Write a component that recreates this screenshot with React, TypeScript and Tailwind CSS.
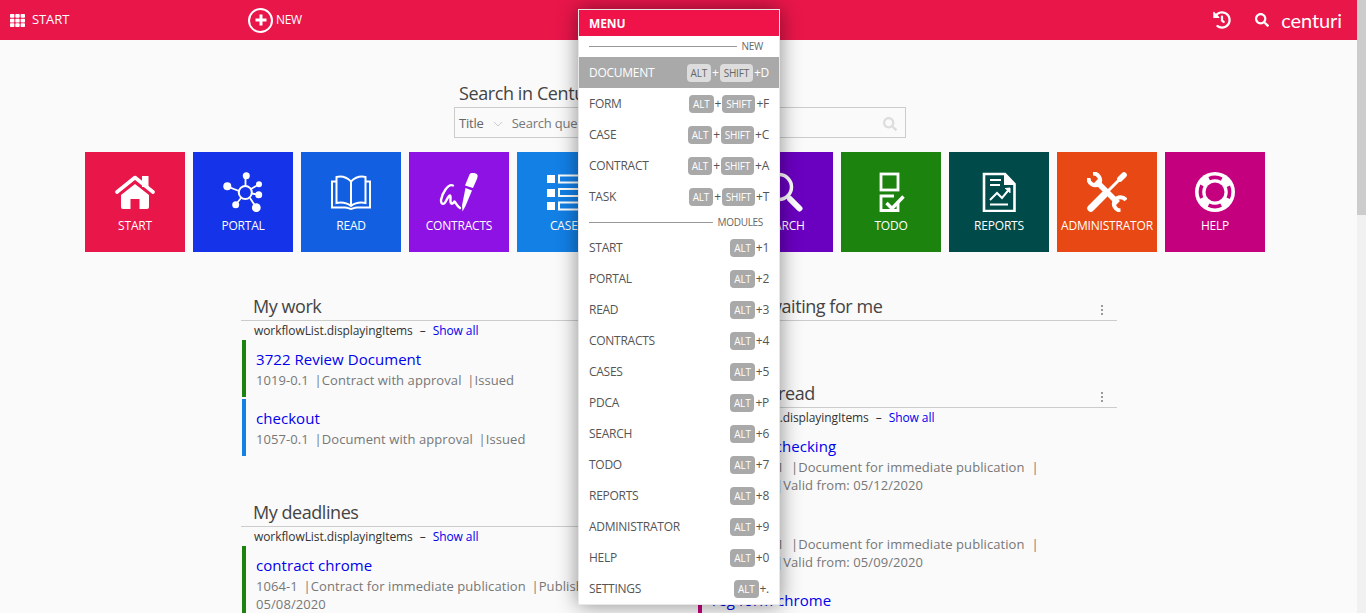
import { FaHistory, FaSearch, FaTh } from 'react-icons/fa';
import type { ReactNode } from 'react';

const font = { fontFamily: '"Open Sans", "Noto Sans", sans-serif' };

function HomeIcon() {
  return (
    <svg viewBox="0 0 40 40" className="w-10 h-10" fill="white">
      <rect x="27" y="4" width="6.5" height="11" />
      <path d="M2 20 L20 5.5 L38 20" fill="none" stroke="white" strokeWidth="3.6" strokeLinecap="round" strokeLinejoin="round" />
      <path d="M6 23 L20 12 L34 23 V35 a2 2 0 0 1 -2 2 H24.5 V27 H15.5 V37 H8 a2 2 0 0 1 -2 -2Z" />
    </svg>
  );
}

function PortalIcon() {
  return (
    <svg viewBox="0 0 40 40" className="w-10 h-10" fill="white" stroke="white" strokeWidth="1.8">
      <path d="M16 19 L4 14.3 M22.5 14 V4 M28 17 L36 12.3 M29 21.5 L35.7 22.7 M27 26 L33.3 35.7 M18 26 L12.7 32.7" />
      <circle cx="22.3" cy="20.5" r="6.5" fill="none" strokeWidth="2" />
      <circle cx="4.3" cy="14.3" r="4" stroke="none" />
      <circle cx="23.3" cy="3.8" r="3.5" stroke="none" />
      <circle cx="36" cy="12.3" r="3" stroke="none" />
      <circle cx="35.7" cy="22.7" r="3.5" stroke="none" />
      <circle cx="33.3" cy="35.7" r="4.4" stroke="none" />
      <circle cx="12.7" cy="32.7" r="3.5" stroke="none" />
    </svg>
  );
}

function ReadIcon() {
  return (
    <svg viewBox="0 0 40 40" className="w-10 h-10" fill="none" stroke="white" strokeWidth="2">
      <path d="M20 9.5 C16 5.5 10 4 5.5 5 V31 C11 30 16 31 20 34 C24 31 29 30 34.5 31 V5 C30 4 24 5.5 20 9.5 Z M20 9.5 V34" />
      <path d="M5 9.5 H1 V35.5 H14 C17 35.5 18.5 37 20 37 C21.5 37 23 35.5 26 35.5 H39 V9.5 H35" />
    </svg>
  );
}

function ContractsIcon() {
  return (
    <svg viewBox="0 0 40 40" className="w-10 h-10" fill="white">
      <path d="M14 13.5 C9 11 3 22 2 28 C2 33 5 33 7 29 C9 25 12 20 11.5 27 C11 32 13 33 15 30 C16 28 16.5 33 21 36" fill="none" stroke="white" strokeWidth="2.4" strokeLinecap="round" strokeLinejoin="round" />
      <path d="M26.5 16 L33 18.6 L26.5 34 L23.5 39.5 L23 33.5 Z" />
      <path d="M26 13.5 L30.5 2.5 C31.5 0.5 37 0.5 38.5 3 C39 4.5 38 7 37.5 8 L34 16 Z" />
    </svg>
  );
}

function CasesIcon() {
  return (
    <svg viewBox="0 0 40 40" className="w-10 h-10" fill="white" stroke="white" strokeWidth="2">
      <rect x="0" y="3" width="8" height="8" stroke="none" />
      <rect x="0" y="17" width="8" height="8" stroke="none" />
      <rect x="0" y="30" width="8" height="8" stroke="none" />
      <rect x="12" y="3.5" width="27" height="7" fill="none" />
      <rect x="12" y="17" width="27" height="7" fill="none" />
      <rect x="12" y="30.5" width="27" height="7" fill="none" />
    </svg>
  );
}

function PdcaIcon() {
  return (
    <svg viewBox="0 0 40 40" className="w-10 h-10" fill="none" stroke="white" strokeWidth="3">
      <circle cx="20" cy="20" r="16" />
    </svg>
  );
}

function SearchIcon() {
  return (
    <svg viewBox="0 0 40 40" className="w-10 h-10" fill="none" stroke="white">
      <circle cx="16" cy="15" r="12.5" strokeWidth="3.5" />
      <path d="M27 27 L36.5 36.5" strokeWidth="6" strokeLinecap="round" />
    </svg>
  );
}

function TodoIcon() {
  return (
    <svg viewBox="0 0 40 40" className="w-10 h-10" fill="none" stroke="white" strokeWidth="2.8">
      <rect x="10" y="2" width="17" height="16" />
      <path d="M27 29 V38.5 H10 V24 H23" />
      <path d="M15.5 31 L21 36.5 L32.5 24.5" strokeWidth="3.4" />
    </svg>
  );
}

function ReportsIcon() {
  return (
    <svg viewBox="0 0 40 40" className="w-10 h-10" fill="none" stroke="white" strokeWidth="2">
      <path d="M5 2 H26 L35.5 12 V39 H5 Z" strokeWidth="2.6" />
      <path d="M26 2 V12 H35.5" fill="white" />
      <path d="M11 8 H22 M11 13 H21 M11 32.5 H29" />
      <path d="M11 28 L18 21 L23 26 L30 17.5" />
      <path d="M26 16.5 L31 16 L31 21" fill="white" strokeWidth="1" />
    </svg>
  );
}

function AdminIcon() {
  return (
    <svg viewBox="0 0 40 40" className="w-10 h-10" fill="none" stroke="white" strokeLinecap="round">
      <path d="M22 18 L33 7" strokeWidth="3" />
      <path d="M33 7 L37 3" strokeWidth="5.6" />
      <path d="M3.8 36.2 L17 23" strokeWidth="7" />
      <path d="M9 9 L31 31" strokeWidth="5.4" strokeLinecap="butt" />
      <path d="M1.5 6 A6.8 6.8 0 0 0 12 12 A6.8 6.8 0 0 0 6 1.5" strokeWidth="4" strokeLinecap="butt" />
      <path d="M39 28 A6.8 6.8 0 0 0 28 28 A6.8 6.8 0 0 0 33.5 38.5" strokeWidth="4" strokeLinecap="butt" />
    </svg>
  );
}

function HelpIcon() {
  return (
    <svg viewBox="0 0 40 40" className="w-10 h-10">
      <circle cx="20" cy="20" r="20" fill="white" />
      <circle cx="20" cy="20" r="14.6" fill="none" stroke="#c4007f" strokeWidth="3.6" strokeDasharray="13 9.94" strokeDashoffset="6.5" />
      <circle cx="20" cy="20" r="9.5" fill="#c4007f" />
    </svg>
  );
}

const tiles: { label: string; bg: string; icon: ReactNode }[] = [
  { label: 'START', bg: 'bg-[#e9164a]', icon: <HomeIcon /> },
  { label: 'PORTAL', bg: 'bg-[#1533e8]', icon: <PortalIcon /> },
  { label: 'READ', bg: 'bg-[#135fe2]', icon: <ReadIcon /> },
  { label: 'CONTRACTS', bg: 'bg-[#8e12e4]', icon: <ContractsIcon /> },
  { label: 'CASES', bg: 'bg-[#1380e6]', icon: <CasesIcon /> },
  { label: 'PDCA', bg: 'bg-[#1338c4]', icon: <PdcaIcon /> },
  { label: 'SEARCH', bg: 'bg-[#6a00c0]', icon: <SearchIcon /> },
  { label: 'TODO', bg: 'bg-[#1c830f]', icon: <TodoIcon /> },
  { label: 'REPORTS', bg: 'bg-[#004a4a]', icon: <ReportsIcon /> },
  { label: 'ADMINISTRATOR', bg: 'bg-[#e84813]', icon: <AdminIcon /> },
  { label: 'HELP', bg: 'bg-[#c4007f]', icon: <HelpIcon /> },
];

function Heading({ title, menu }: { title: string; menu?: boolean }) {
  return (
    <div className="h-[26px] border-b border-[#cccccc] pl-3 pr-[14px] flex items-center justify-between">
      <span className="text-[18px] leading-[24px] -mt-[4px] text-[#444444] tracking-[-0.45px] whitespace-nowrap">{title}</span>
      {menu && (
        <span className="flex flex-col gap-[2px] mt-1">
          <span className="w-[2px] h-[2px] bg-[#999999]" />
          <span className="w-[2px] h-[2px] bg-[#999999]" />
          <span className="w-[2px] h-[2px] bg-[#999999]" />
        </span>
      )}
    </div>
  );
}

function ShowAll() {
  return (
    <div className="h-[19px] pl-[13px] pt-px flex items-center text-[12px] text-[#333333] tracking-[-0.08px] whitespace-nowrap">
      <span>workflowList.displayingItems</span>
      <span className="ml-[7px] mr-[7px]">–</span>
      <a className="text-[#0000ee]">Show all</a>
    </div>
  );
}

function Item({ title, lines, color, h }: { title: string; lines: string[]; color: string; h: string }) {
  return (
    <div className={`${h} border-l-4 ${color} ml-px pl-[10px] pt-[9px] whitespace-pre`}>
      <div className="text-[15px] leading-[21px] text-[#0000ee] tracking-[0.05px]">{title}</div>
      {lines.map((l, i) => (
        <div key={i} className={`text-[13px] leading-[18px] text-[#777777] tracking-[0.08px] ${i === 0 ? 'mt-[1px]' : ''}`}>
          {l}
        </div>
      ))}
    </div>
  );
}

function Key({ label, active }: { label: string; active?: boolean }) {
  return (
    <span
      className={`h-[18px] px-[4px] rounded-[4px] text-[10px] leading-[18px] tracking-[-0.2px] ${
        active ? 'bg-[#dddddd] text-[#666666]' : 'bg-[#a9a9a9] text-white'
      }`}
    >
      {label}
    </span>
  );
}

function MenuRow({ label, k, shift, active }: { label: string; k: string; shift?: boolean; active?: boolean }) {
  return (
    <div
      className={`h-[31px] px-[10px] flex items-center justify-between text-[12px] tracking-[-0.27px] ${
        active ? 'bg-[#a9a9a9] text-white' : 'text-[#555555]'
      }`}
    >
      <span>{label}</span>
      <span className="flex items-center">
        <Key label="ALT" active={active} />
        {shift && <span className="mx-[1px]">+</span>}
        {shift && <Key label="SHIFT" active={active} />}
        <span className="ml-px">+{k}</span>
      </span>
    </div>
  );
}

function MenuDivider({ label, h }: { label: string; h: string }) {
  return (
    <div className={`${h} pl-[10px] pr-[16px] flex items-center gap-[5px] text-[10px] text-[#666666]`}>
      <span className="flex-1 h-px bg-[#999999]" />
      <span className="tracking-[-0.3px]">{label}</span>
    </div>
  );
}

const modules = [
  ['START', '1'],
  ['PORTAL', '2'],
  ['READ', '3'],
  ['CONTRACTS', '4'],
  ['CASES', '5'],
  ['PDCA', 'P'],
  ['SEARCH', '6'],
  ['TODO', '7'],
  ['REPORTS', '8'],
  ['ADMINISTRATOR', '9'],
  ['HELP', '0'],
  ['SETTINGS', '.'],
];

export default function App() {
  return (
    <div className="relative h-[613px] overflow-hidden flex bg-[#fafafa]" style={font}>
      <div className="flex-1 min-w-0">
        <header className="h-10 bg-[#e9164a] flex items-center pl-[10px] pr-[15px] text-white">
          <div className="w-[238px] flex items-center text-[13px] tracking-[-0.1px]">
            <FaTh className="w-[15px] h-[15px]" />
            <span className="ml-[7px]">START</span>
          </div>
          <div className="flex items-center text-[12px] tracking-[-0.3px]">
            <span className="w-[25px] h-[25px] rounded-full border-2 border-white flex items-center justify-center">
              <svg viewBox="0 0 12 12" className="w-[12px] h-[12px]" fill="none" stroke="white" strokeWidth="3">
                <path d="M6 0.5 V11.5 M0.5 6 H11.5" />
              </svg>
            </span>
            <span className="ml-[3px]">NEW</span>
          </div>
          <div className="ml-auto flex items-center">
            <FaHistory className="w-[18px] h-[18px]" />
            <FaSearch className="w-[14px] h-[14px] ml-[24px]" />
            <span className="ml-[12px] text-[20px] leading-[24px] tracking-[-0.1px]" style={{ fontFamily: 'Lato, sans-serif' }}>
              centuri
            </span>
          </div>
        </header>

        <section className="pl-[454px] pt-[42px]">
          <div className="pl-[5px] h-[24px] text-[18px] leading-[22px] text-[#444444] tracking-[-0.4px] whitespace-nowrap">Search in Centuri</div>
          <div className="mt-px w-[452px] h-[31px] border border-[#cccccc] flex items-center pl-[4px] pr-[8px] pt-[2px] text-[13px] text-[#666666] tracking-[-0.2px]">
            <span>Title</span>
            <svg viewBox="0 0 10 6" className="w-[10px] h-[6px] ml-[9px]" fill="none" stroke="#cccccc">
              <path d="M1 1 L5 5 L9 1" />
            </svg>
            <span className="ml-[9px] text-[#777777]">Search query...</span>
            <FaSearch className="ml-auto w-[14px] h-[14px] text-[#dddddd]" />
          </div>
        </section>

        <section className="mt-[14px] pl-[85px] flex gap-2">
          {tiles.map((t) => (
            <div key={t.label} className={`w-[100px] h-[100px] shrink-0 pt-[20px] flex flex-col items-center text-white ${t.bg}`}>
              {t.icon}
              <span className="mt-[5px] text-[12px] leading-[18px] tracking-[-0.2px] whitespace-nowrap">{t.label}</span>
            </div>
          ))}
        </section>

        <section className="mt-[43px] pl-[241px] flex gap-[36px]">
          <div className="w-[420px]">
            <Heading title="My work" />
            <ShowAll />
            <Item title="3722 Review Document" lines={['1019-0.1 \u2009|Contract with approval \u2009|Issued']} color="border-[#1c830f]" h="h-[57px] mb-[2px]" />
            <Item title="checkout" lines={['1057-0.1 \u2009|Document with approval \u2009|Issued']} color="border-[#1380e6]" h="h-[57px]" />
            <div className="mt-[45px]">
              <Heading title="My deadlines" />
            </div>
            <ShowAll />
            <Item title="contract chrome" lines={['1064-1 \u2009|Contract for immediate publication \u2009|Published', '05/08/2020']} color="border-[#1c830f]" h="h-[77px]" />
          </div>
          <div className="w-[420px]">
            <Heading title="Others waiting for me" menu />
            <div className="h-[61px]" />
            <Heading title="Must be read" menu />
            <ShowAll />
            <Item title="Docs for checking" lines={['FR-1062-0.1  |Document for immediate publication  |', 'Published |Valid from: 05/12/2020']} color="border-[#1380e6]" h="h-[77px]" />
            <Item title="Test" lines={['FR-1061-0.1  |Document for immediate publication  |', 'Published |Valid from: 05/09/2020']} color="border-[#1380e6]" h="h-[77px]" />
            <Item title="reg form chrome" lines={[]} color="border-[#c4007f]" h="h-[77px]" />
          </div>
        </section>
      </div>

      <div className="w-[9px] shrink-0 bg-[#f1f1f1]">
        <div className="h-[215px] bg-[#cccccc]" />
      </div>

      <div className="absolute left-[578px] top-[9px] w-[202px] h-[596px] bg-white border border-[#e8e8e8] shadow-[0_0_20px_rgba(0,0,0,0.45)]">
        <div className="h-[26px] bg-[#ef1349] px-[10px] pt-px flex items-center text-white text-[12px] font-bold tracking-[-0.1px]">MENU</div>
        <MenuDivider label="NEW" h="h-[21px]" />
        <MenuRow label="DOCUMENT" k="D" shift active />
        <MenuRow label="FORM" k="F" shift />
        <MenuRow label="CASE" k="C" shift />
        <MenuRow label="CONTRACT" k="A" shift />
        <MenuRow label="TASK" k="T" shift />
        <MenuDivider label="MODULES" h="h-[20px]" />
        {modules.map(([label, k]) => (
          <MenuRow key={label} label={label} k={k} />
        ))}
      </div>
    </div>
  );
}
